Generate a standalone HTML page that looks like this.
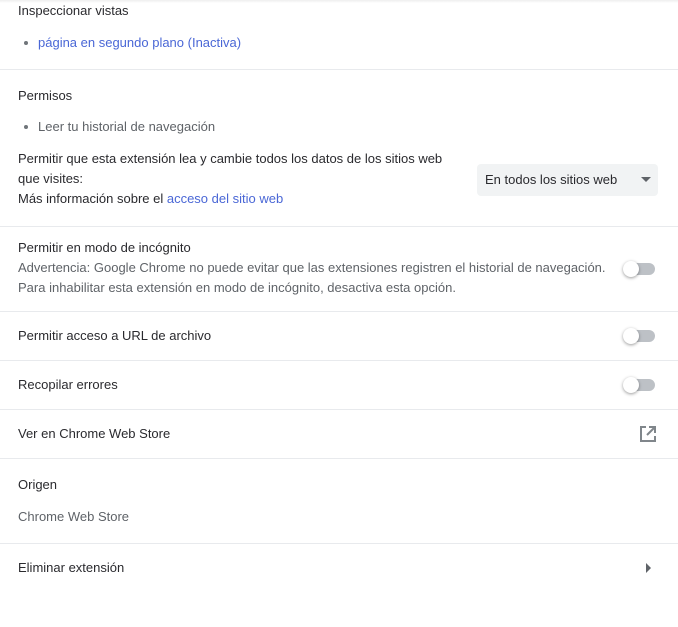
<!DOCTYPE html>
<html><head><meta charset="utf-8"><style>
html,body{margin:0;padding:0;background:#fff;width:678px;height:627px;overflow:hidden;position:relative;font-family:"Liberation Sans",Roboto,sans-serif;font-size:13px;color:#2a2a2e}
.t{position:absolute;left:18px;line-height:16px;white-space:nowrap}
.s{color:#5f6368}
.a{color:#4a67d6}
.b{position:absolute;left:24px;width:4px;height:4px;border-radius:50%;background:#70757a}
.hr{position:absolute;left:0;width:678px;height:1px;background:#e8eaed}
.tg{position:absolute;left:625px;width:30px;height:12px;border-radius:6px;background:#bdc1c6}
.kn{position:absolute;left:623px;width:16px;height:16px;border-radius:50%;background:#fff;box-shadow:0 1px 3px rgba(0,0,0,.4)}
</style></head><body>
<div style="position:absolute;left:0;top:0;width:678px;height:3px;background:linear-gradient(#eee,#fff)"></div>
<div class="t" style="top:3px">Inspeccionar vistas</div>
<div class="b" style="top:41px"></div>
<div class="t a" style="top:35px;left:38px">página en segundo plano (Inactiva)</div>
<div class="hr" style="top:69px"></div>
<div class="t" style="top:88px">Permisos</div>
<div class="b" style="top:125px"></div>
<div class="t s" style="top:119px;left:38px">Leer tu historial de navegación</div>
<div class="t" style="top:151px">Permitir que esta extensión lea y cambie todos los datos de los sitios web</div>
<div class="t" style="top:171px">que visites:</div>
<div class="t" style="top:191px">Más información sobre el <span class="a">acceso del sitio web</span></div>
<div style="position:absolute;left:477px;top:164px;width:181px;height:32px;background:#f1f3f4;border-radius:4px"></div>
<div class="t" style="top:172px;left:485px">En todos los sitios web</div>
<div style="position:absolute;left:641px;top:177px;width:0;height:0;border-left:5px solid transparent;border-right:5px solid transparent;border-top:5px solid #5f6368"></div>
<div class="hr" style="top:226px"></div>
<div class="t" style="top:240px">Permitir en modo de incógnito</div>
<div class="t s" style="top:260px">Advertencia: Google Chrome no puede evitar que las extensiones registren el historial de navegación.</div>
<div class="t s" style="top:280px">Para inhabilitar esta extensión en modo de incógnito, desactiva esta opción.</div>
<div class="tg" style="top:263px"></div><div class="kn" style="top:261px"></div>
<div class="hr" style="top:311px"></div>
<div class="t" style="top:328px">Permitir acceso a URL de archivo</div>
<div class="tg" style="top:330px"></div><div class="kn" style="top:328px"></div>
<div class="hr" style="top:360px"></div>
<div class="t" style="top:377px">Recopilar errores</div>
<div class="tg" style="top:379px"></div><div class="kn" style="top:377px"></div>
<div class="hr" style="top:409px"></div>
<div class="t" style="top:426px">Ver en Chrome Web Store</div>
<svg style="position:absolute;left:639px;top:425px" width="18" height="18" viewBox="0 0 18 18"><path d="M7 2H2v14h14v-5" fill="none" stroke="#80868b" stroke-width="2"/><path d="M10 2h6v6M16 2L8 10" fill="none" stroke="#80868b" stroke-width="2"/></svg>
<div class="hr" style="top:458px"></div>
<div class="t" style="top:477px">Origen</div>
<div class="t s" style="top:509px">Chrome Web Store</div>
<div class="hr" style="top:543px"></div>
<div class="t" style="top:560px">Eliminar extensión</div>
<div style="position:absolute;left:646px;top:563px;width:0;height:0;border-top:5px solid transparent;border-bottom:5px solid transparent;border-left:5px solid #5f6368"></div>
</body></html>
